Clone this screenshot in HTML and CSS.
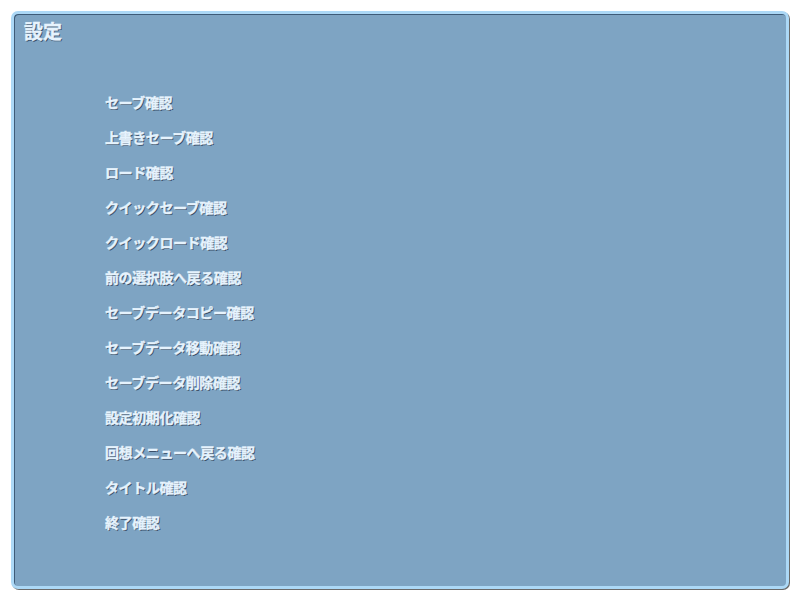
FILE: index.html
```html
<!DOCTYPE html>
<html lang="ja">
<head>
<meta charset="utf-8">
<title>設定</title>
<link rel="stylesheet" href="styles.css">
</head>
<body>
<div class="panel">
  <h1 class="title">設定</h1>
  <ul class="menu">
    <li>セーブ確認</li>
    <li>上書きセーブ確認</li>
    <li>ロード確認</li>
    <li>クイックセーブ確認</li>
    <li>クイックロード確認</li>
    <li>前の選択肢へ戻る確認</li>
    <li>セーブデータコピー確認</li>
    <li>セーブデータ移動確認</li>
    <li>セーブデータ削除確認</li>
    <li>設定初期化確認</li>
    <li>回想メニューへ戻る確認</li>
    <li>タイトル確認</li>
    <li>終了確認</li>
  </ul>
</div>
</body>
</html>
```
FILE: styles.css
```css
html, body {
  margin: 0;
  padding: 0;
  background: #ffffff;
}
body {
  width: 800px;
  height: 600px;
  font-family: "Noto Sans CJK JP", "Noto Sans", sans-serif;
}
.panel {
  box-sizing: border-box;
  margin: 11px 0 0 11px;
  width: 778px;
  height: 578px;
  border: 3px solid #acd8f6;
  border-radius: 7px;
  background: #7ea4c3;
  box-shadow: inset 1px 1px 0 #3e5b78, 1px 1px 0 #6a6a6a;
  padding: 5px 0 0 10px;
}
.title,
.menu li {
  color: #e6f3fd;
  font-weight: 700;
  -webkit-text-stroke: 0.4px #e6f3fd;
  text-shadow: 1px 1px 0 #3a4f68;
}
.title {
  margin: 0;
  font-size: 19px;
  line-height: 24px;
}
.menu {
  list-style: none;
  margin: 0;
  padding: 42px 0 0 81px;
}
.menu li {
  font-size: 14px;
  line-height: 35px;
  height: 35px;
  letter-spacing: -0.4px;
}
```
